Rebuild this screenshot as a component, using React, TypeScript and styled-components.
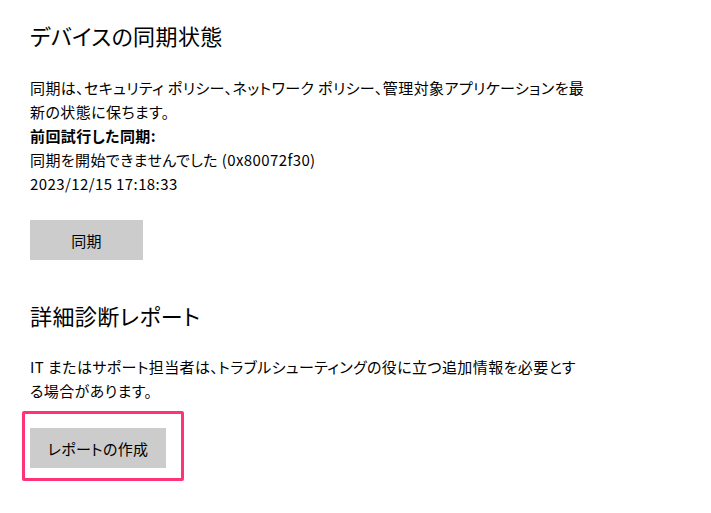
import React from "react";
import styled, { createGlobalStyle } from "styled-components";

const Global = createGlobalStyle`
  html, body { margin: 0; padding: 0; background: #fff; }
  body {
    font-family: "Noto Sans CJK JP", "Noto Sans", sans-serif;
    color: #000;
  }
`;

const Page = styled.div`
  padding: 20px 0 0 30px;
  display: flex;
  flex-direction: column;
  align-items: flex-start;
`;

const Title = styled.h2<{ $top: number }>`
  margin: ${(p) => p.$top}px 0 0;
  font-size: 22px;
  line-height: 30px;
  font-weight: 400;
  letter-spacing: 0.4px;
  font-feature-settings: "palt";
`;

const Para = styled.p<{ $top: number }>`
  margin: ${(p) => p.$top}px 0 0;
  font-size: 15px;
  line-height: 24px;
  letter-spacing: 0.4px;
  font-feature-settings: "palt";
  width: 600px;
`;

const Strong = styled.span`
  font-weight: 700;
`;

const Button = styled.button<{ $w: number; $top?: number }>`
  margin: ${(p) => p.$top ?? 0}px 0 0;
  width: ${(p) => p.$w}px;
  height: 40px;
  border: none;
  background: #cccccc;
  color: #000;
  font-family: "Noto Sans CJK JP", "Noto Sans", sans-serif;
  font-size: 15px;
  letter-spacing: 0.3px;
  font-feature-settings: "palt";
  padding: 0;
`;

const Highlight = styled.div`
  margin: 8px 0 0 -8px;
  border: 3px solid #ff3377;
  border-radius: 2px;
  padding: 14px 15px 10px 5px;
  display: flex;
`;

export default function App() {
  return (
    <>
      <Global />
      <Page>
        <Title $top={0}>デバイスの同期状態</Title>
        <Para $top={26}>
          同期は、セキュリティ ポリシー、ネットワーク ポリシー、管理対象アプリケーションを最
          <br />
          新の状態に保ちます。
          <br />
          <Strong>前回試行した同期:</Strong>
          <br />
          同期を開始できませんでした (0x80072f30)
          <br />
          2023/12/15 17:18:33
        </Para>
        <Button $w={113} $top={24}>同期</Button>
        <Title $top={40}>詳細診断レポート</Title>
        <Para $top={25}>
          IT またはサポート担当者は、トラブルシューティングの役に立つ追加情報を必要とす
          <br />
          る場合があります。
        </Para>
        <Highlight>
          <Button $w={136}>レポートの作成</Button>
        </Highlight>
      </Page>
    </>
  );
}
